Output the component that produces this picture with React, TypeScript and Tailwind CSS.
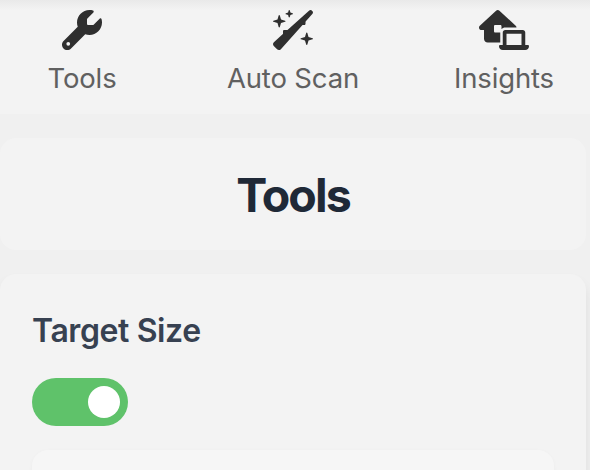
import type { ReactNode } from "react";
import { FaWrench, FaWandSparkles, FaHouseLaptop } from "react-icons/fa6";

function NavItem({ icon, label, className }: { icon: ReactNode; label: string; className: string }) {
  return (
    <button className={`flex flex-col items-center ${className}`}>
      <span className="flex h-10 items-center text-[40px] text-[#2f2f2f]">{icon}</span>
      <span className="mt-2 h-10 whitespace-nowrap text-[27.5px] font-normal leading-10 tracking-[-0.15px] text-[#606060]">{label}</span>
    </button>
  );
}

export default function App() {
  return (
    <div className="h-[470px] w-[590px] overflow-hidden bg-[#f0f0f0] font-['Inter','Liberation_Sans',sans-serif]">
      <nav className="flex h-[114px] bg-[linear-gradient(to_bottom,#e9e9e9_0px,#f3f3f3_10px)] pt-2.5">
        <NavItem className="w-[164px]" icon={<FaWrench />} label="Tools" />
        <NavItem className="w-[258px]" icon={<FaWandSparkles />} label="Auto Scan" />
        <NavItem className="w-[164px]" icon={<FaHouseLaptop className="h-10 w-[50px]" />} label="Insights" />
      </nav>
      <main className="flex w-[586px] flex-col gap-6 pt-6">
        <header className="flex h-28 items-center justify-center rounded-2xl bg-[#f3f3f3] pt-1">
          <h1 className="text-[46.5px] font-bold tracking-[-1.9px] text-[#1f2937]">Tools</h1>
        </header>
        <section className="h-[260px] rounded-2xl bg-[#f3f3f3] px-8 pt-9 shadow-[0_8px_12px_rgba(0,0,0,0.08)]">
          <h2 className="h-11 text-[32px] font-semibold leading-[42px] tracking-[-0.4px] text-[#374151]">Target Size</h2>
          <button className="mt-6 flex h-12 w-24 items-center justify-end rounded-full bg-[#5fc26a] p-2">
            <span className="size-8 rounded-full bg-white" />
          </button>
          <div className="mt-6 h-40 w-[522px] rounded-2xl bg-[#f6f6f6] shadow-[0_1px_4px_rgba(0,0,0,0.03)]" />
        </section>
      </main>
    </div>
  );
}
